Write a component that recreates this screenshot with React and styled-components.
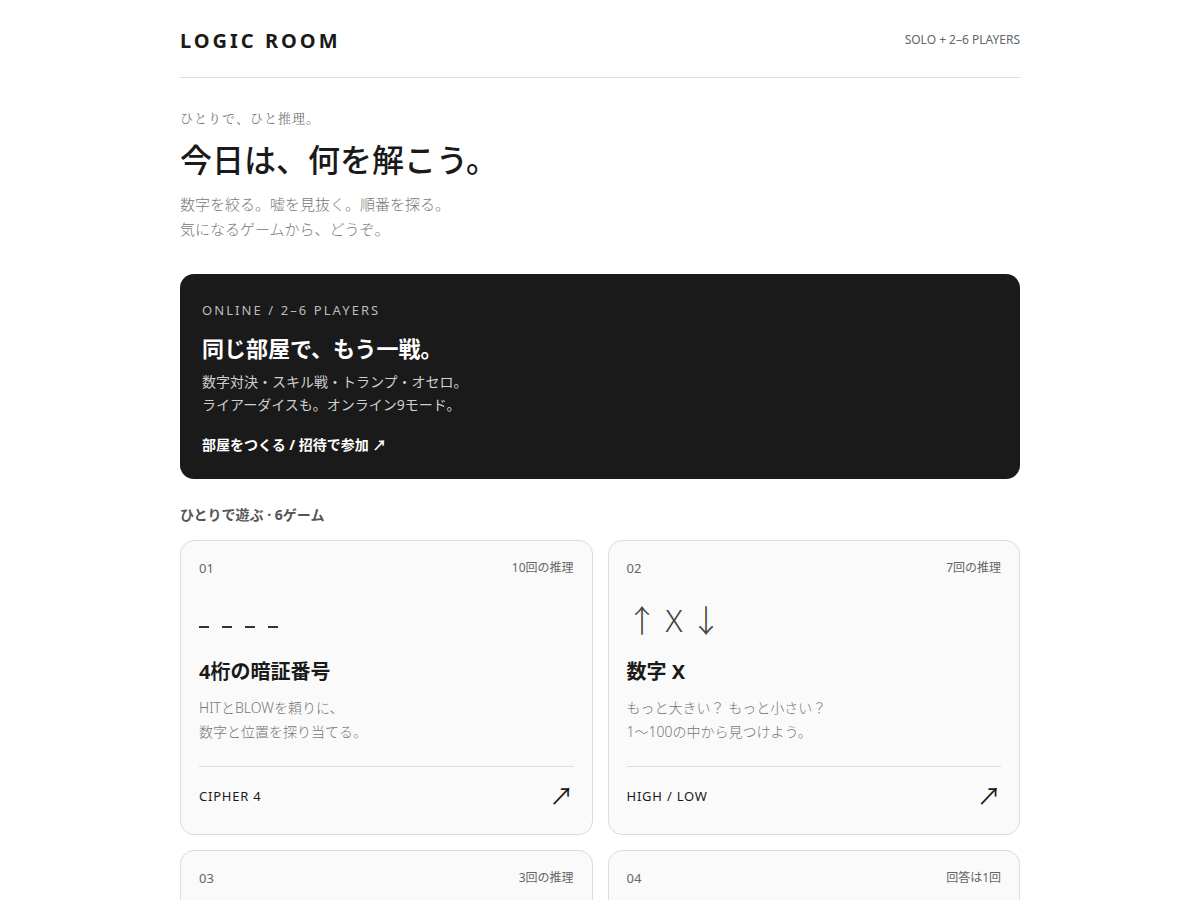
import React from "react";
import styled, { createGlobalStyle } from "styled-components";

const GlobalStyle = createGlobalStyle`
	* {
		box-sizing: border-box;
	}

	body {
		margin: 0;
		background: #fff;
		color: #1a1a1a;
		font-family: "Noto Sans", "Noto Sans CJK JP", sans-serif;
	}
`;

const games = [
	{
		no: "01",
		tries: "10回の推理",
		glyph: "dash",
		title: "4桁の暗証番号",
		desc: ["HITとBLOWを頼りに、", "数字と位置を探り当てる。"],
		code: "CIPHER 4",
	},
	{
		no: "02",
		tries: "7回の推理",
		glyph: "↑ X ↓",
		title: "数字 X",
		desc: ["もっと大きい？ もっと小さい？", "1〜100の中から見つけよう。"],
		code: "HIGH / LOW",
	},
	{
		no: "03",
		tries: "3回の推理",
		glyph: "",
		title: "",
		desc: [],
		code: "",
	},
	{
		no: "04",
		tries: "回答は1回",
		glyph: "",
		title: "",
		desc: [],
		code: "",
	},
];

function GameCard({ game }) {
	return (
		<Card>
			<CardTop>
				<span>{game.no}</span>
				<Tries>{game.tries}</Tries>
			</CardTop>
			<Glyph>
				{game.glyph === "dash" ? (
					<Dashes>
						<i />
						<i />
						<i />
						<i />
					</Dashes>
				) : (
					game.glyph
				)}
			</Glyph>
			<CardTitle>{game.title}</CardTitle>
			<CardDesc>
				{game.desc.map((line) => (
					<span key={line}>{line}</span>
				))}
			</CardDesc>
			<CardFoot>
				<Code>{game.code}</Code>
				<Arrow>↗</Arrow>
			</CardFoot>
		</Card>
	);
}

export default function App() {
	return (
		<>
			<GlobalStyle />
			<Page>
				<Header>
					<Logo>LOGIC ROOM</Logo>
					<Mode>SOLO + 2–6 PLAYERS</Mode>
				</Header>

				<Hero>
					<Eyebrow>ひとりで、ひと推理。</Eyebrow>
					<Title>今日は、何を解こう。</Title>
					<Lead>
						数字を絞る。嘘を見抜く。順番を探る。
						<br />
						気になるゲームから、どうぞ。
					</Lead>
				</Hero>

				<Online>
					<OnlineLabel>ONLINE / 2–6 PLAYERS</OnlineLabel>
					<OnlineTitle>同じ部屋で、もう一戦。</OnlineTitle>
					<OnlineDesc>
						数字対決・スキル戦・トランプ・オセロ。
						<br />
						ライアーダイスも。オンライン9モード。
					</OnlineDesc>
					<OnlineLink>部屋をつくる / 招待で参加 ↗</OnlineLink>
				</Online>

				<SectionLabel>ひとりで遊ぶ · 6ゲーム</SectionLabel>

				<Grid>
					{games.map((g) => (
						<GameCard key={g.no} game={g} />
					))}
				</Grid>
			</Page>
		</>
	);
}

const Page = styled.div`
	width: 840px;
	margin: 0 auto;
	padding-bottom: 40px;
`;

const Header = styled.header`
	display: flex;
	align-items: center;
	justify-content: space-between;
	padding: 27px 0 22px;
	border-bottom: 1px solid #dedede;
`;

const Logo = styled.h1`
	margin: 0;
	font-size: 20px;
	line-height: 28px;
	font-weight: 700;
	letter-spacing: 0.15em;
	color: #1a1a1a;
`;

const Mode = styled.span`
	font-size: 12px;
	line-height: 26px;
	align-self: flex-start;
	color: #666;
`;

const Hero = styled.section`
	padding-top: 31px;
`;

const Eyebrow = styled.p`
	margin: 0;
	font-family: "Noto Serif CJK JP", "Liberation Serif", serif;
	font-size: 13px;
	line-height: 18px;
	letter-spacing: 0.08em;
	color: #777;
`;

const Title = styled.h2`
	margin: 11px 0 0;
	font-size: 32px;
	line-height: 44px;
	font-weight: 500;
	color: #1a1a1a;
`;

const Lead = styled.p`
	margin: 10px 0 0;
	font-size: 15px;
	line-height: 25px;
	font-weight: 300;
	color: #777;
`;

const Online = styled.section`
	margin-top: 32px;
	padding: 28px 22px 23px;
	background: #1a1a1a;
	border-radius: 14px;
	color: #fff;
`;

const OnlineLabel = styled.div`
	font-size: 13px;
	line-height: 16px;
	letter-spacing: 0.16em;
	color: #bdbdbd;
`;

const OnlineTitle = styled.h3`
	margin: 15px 0 0;
	font-size: 22px;
	line-height: 30px;
	font-weight: 700;
`;

const OnlineDesc = styled.p`
	margin: 7px 0 0;
	font-size: 14px;
	line-height: 23px;
	color: #cfcfcf;
`;

const OnlineLink = styled.div`
	margin-top: 18px;
	font-size: 14px;
	line-height: 22px;
	font-weight: 700;
`;

const SectionLabel = styled.h4`
	margin: 26px 0 0;
	font-size: 14px;
	line-height: 20px;
	font-weight: 700;
	color: #555;
`;

const Grid = styled.div`
	display: grid;
	grid-template-columns: 1fr 1fr;
	gap: 15px;
	margin-top: 15px;
`;

const Card = styled.article`
	display: flex;
	flex-direction: column;
	padding: 19px 18px 26px;
	background: #fafafa;
	border: 1px solid #dcdcdc;
	border-radius: 14px;
`;

const CardTop = styled.div`
	display: flex;
	justify-content: space-between;
	font-size: 13px;
	line-height: 16px;
	color: #666;
`;

const Tries = styled.span`
	font-size: 12px;
`;

const Glyph = styled.div`
	display: flex;
	align-items: center;
	height: 48px;
	margin-top: 18px;
	font-size: 31px;
	font-weight: 300;
	color: #444;
`;

const Dashes = styled.div`
	display: flex;
	gap: 13px;
	padding-top: 18px;

	i {
		display: block;
		width: 10px;
		height: 2px;
		background: #333;
	}
`;

const CardTitle = styled.h5`
	margin: 16px 0 0;
	font-size: 20px;
	line-height: 28px;
	font-weight: 700;
	color: #1a1a1a;
`;

const CardDesc = styled.p`
	display: flex;
	flex-direction: column;
	margin: 10px 0 0;
	font-size: 14px;
	line-height: 24px;
	font-weight: 300;
	color: #777;
`;

const CardFoot = styled.div`
	display: flex;
	align-items: center;
	justify-content: space-between;
	margin-top: 22px;
	padding-top: 17px;
	border-top: 1px solid #dcdcdc;
`;

const Code = styled.span`
	font-size: 13px;
	letter-spacing: 0.06em;
	color: #1a1a1a;
`;

const Arrow = styled.span`
	font-size: 24px;
	line-height: 24px;
	color: #1a1a1a;
`;
